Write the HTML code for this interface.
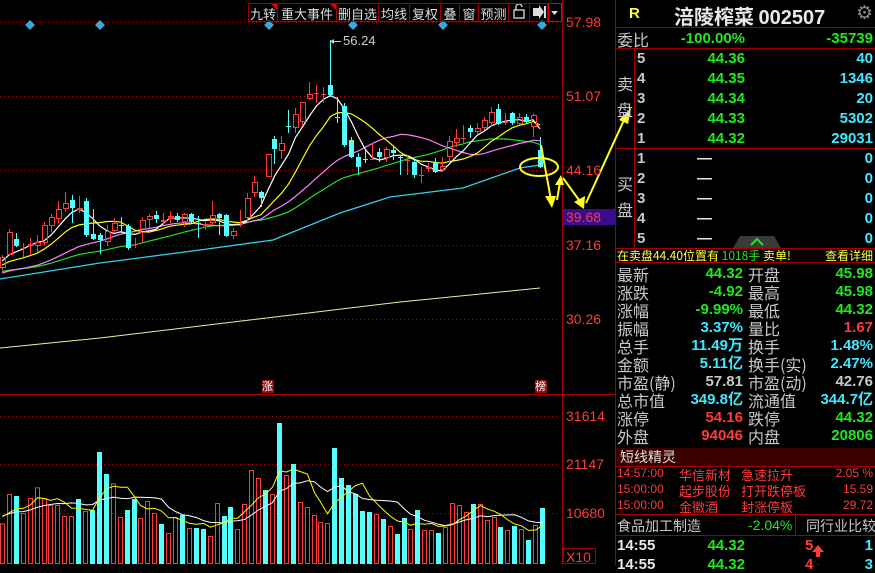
<!DOCTYPE html>
<html><head><meta charset="utf-8">
<style>
body{margin:0;background:#000;width:875px;height:565px;overflow:hidden;position:relative;font-family:"Liberation Sans","Noto Sans CJK SC",sans-serif}
.a{position:absolute;white-space:nowrap}
.cn{font-family:"Noto Sans CJK SC","WenQuanYi Zen Hei",sans-serif}
.tb{position:absolute;top:3px;height:19px;border:1px solid #a00000;border-left:none;color:#ddd;font-size:13px;line-height:19px;text-align:center;font-family:"Noto Sans CJK SC",sans-serif;box-sizing:border-box}
.ax{position:absolute;left:566px;color:#ff3a3a;font-size:14px}
.r{color:#ff3a3a}.g{color:#1ee81e}.c{color:#3ee8ff}.w{color:#e8e8e8}.y{color:#ffff40}.gy{color:#c8c8c8}
.n{font-weight:bold;font-size:15px}
.lb{position:absolute;left:617px;font-size:16px;color:#c8c8c8;font-family:"Noto Sans CJK SC",sans-serif;line-height:18px}
.lb2{position:absolute;left:748px;font-size:16px;color:#c8c8c8;font-family:"Noto Sans CJK SC",sans-serif;line-height:18px}
.v1{position:absolute;right:132px;font-size:15px;font-weight:bold;line-height:18px}
.v2{position:absolute;right:2px;font-size:15px;font-weight:bold;line-height:18px}
</style></head><body>
<svg id="s" width="875" height="565" style="position:absolute;left:0;top:0"></svg>

<div class="tb" style="left:248px;width:30px;border-left:1px solid #a00000">九转</div>
<div class="tb" style="left:278px;width:59px">重大事件</div>
<div class="tb" style="left:337px;width:42px">删自选</div>
<div class="tb" style="left:379px;width:31px">均线</div>
<div class="tb" style="left:410px;width:31px">复权</div>
<div class="tb" style="left:441px;width:19px">叠</div>
<div class="tb" style="left:460px;width:19px">窗</div>
<div class="tb" style="left:479px;width:30px">预测</div>
<div class="tb" style="left:509px;width:21px"></div>
<div class="tb" style="left:530px;width:18px"></div>
<div class="tb" style="left:548px;width:14px;border:1px solid #e00000"></div>

<div class="ax" style="top:14px">57.98</div>
<div class="ax" style="top:88px">51.07</div>
<div class="ax" style="top:162px">44.16</div>
<div class="ax" style="top:237px">37.16</div>
<div class="ax" style="top:311px">30.26</div>
<div class="a" style="left:563px;top:209px;width:53px;height:16px;background:#3c0a8c"></div>
<div class="ax" style="top:209px">39.68</div>
<div class="a" style="left:343px;top:33px;color:#ccc;font-size:13px">56.24</div>

<div class="a cn" style="left:262px;top:380px;width:12px;height:13px;background:#8a1010;color:#fff;font-size:11px;line-height:13px">涨</div>
<div class="a cn" style="left:535px;top:380px;width:12px;height:13px;background:#8a1010;color:#fff;font-size:11px;line-height:13px">榜</div>
<div class="ax" style="top:408px">31614</div>
<div class="ax" style="top:456px">21147</div>
<div class="ax" style="top:505px">10680</div>
<div class="a" style="left:563px;top:548px;width:33px;height:16px;border:1px solid #a00000;color:#ff3a3a;font-size:14px;line-height:16px;box-sizing:border-box;padding-left:2px">X10</div>

<div class="a y" style="left:629px;top:5px;font-size:15px;font-weight:bold">R</div>
<div class="a w" style="left:674px;top:1px;font-size:20px;font-weight:bold;font-family:'Noto Sans CJK SC',sans-serif">涪陵榨菜 <span style="font-family:'Liberation Sans',sans-serif">002507</span></div>
<div class="a" style="left:856px;top:2px;color:#888;font-size:19px">⚙</div>

<div class="lb" style="top:30px">委比</div>
<div class="a g n" style="right:130px;top:30px">-100.00%</div>
<div class="a g n" style="right:2px;top:30px">-35739</div>
<div class="a cn gy" style="left:617px;top:70px;font-size:16px;line-height:26px">卖<br>盘</div>
<div class="a cn gy" style="left:617px;top:170px;font-size:16px;line-height:26px">买<br>盘</div>
<div id="ob"></div>

<div class="a cn" style="left:617px;top:247px;font-size:12px;color:#ffff40">在卖盘44.40位置有 <span class="g">1018手</span> 卖单!</div>
<div class="a cn" style="right:2px;top:247px;font-size:12px;color:#ffff40">查看详细</div>

<div id="st"></div>

<div class="a" style="left:616px;top:448px;width:259px;height:18px;background:#3a0000"></div>
<div class="a cn" style="left:620px;top:448px;font-size:14px;color:#ddd;line-height:18px">短线精灵</div>
<div id="sp"></div>

<div class="a cn gy" style="left:617px;top:516px;font-size:14px">食品加工制造</div>
<div class="a g" style="left:748px;top:517px;font-size:14px">-2.04%</div>
<div class="a cn gy" style="left:806px;top:516px;font-size:14px">同行业比较</div>
<div class="a w n" style="left:617px;top:537px">14:55</div>
<div class="a g n" style="right:130px;top:537px">44.32</div>
<div class="a r n" style="left:805px;top:537px">5</div>
<div class="a c n" style="right:2px;top:537px">1</div>
<div class="a w n" style="left:617px;top:556px">14:55</div>
<div class="a g n" style="right:130px;top:556px">44.32</div>
<div class="a r n" style="left:805px;top:556px">4</div>
<div class="a c n" style="right:2px;top:556px">3</div>

<script>
var S=document.getElementById('s'),h='';
function L(x1,y1,x2,y2,c,w,d){h+='<line x1="'+x1+'" y1="'+y1+'" x2="'+x2+'" y2="'+y2+'" stroke="'+c+'" stroke-width="'+(w||1)+'"'+(d?' stroke-dasharray="'+d+'"':'')+'/>';}
function R(x,y,w,hh,f,s){h+='<rect x="'+x+'" y="'+y+'" width="'+w+'" height="'+hh+'" fill="'+(f||'none')+'"'+(s?' stroke="'+s+'"':'')+'/>';}
function P(pts,c,w){h+='<polyline fill="none" stroke="'+c+'" stroke-width="'+(w||1)+'" points="'+pts.map(function(p){return p[0].toFixed(1)+','+p[1].toFixed(1)}).join(' ')+'"/>';}
var RD='#ff3a3a',CY='#54ffff',DR='#a00000';
[22,96,170,245,319].forEach(function(y){L(0,y+.5,560,y+.5,'#b00000',1,'1 3');});
[416,464,513].forEach(function(y){L(0,y+.5,560,y+.5,'#b00000',1,'1 3');});
L(562.5,0,562.5,565,DR);L(0,394.5,615,394.5,DR);L(615.5,0,615.5,565,DR);
[30,100,269,353,443,542].forEach(function(x){h+='<rect x="'+(x-3.5)+'" y="21.5" width="7" height="7" fill="#3aa8d8" transform="rotate(45 '+x+' 25)"/>';});
var C=[['r',257,268,255,270],['r',232,255,229,256],['c',239,246,233,247],['r',248,249,243,257],['r',244,246,238,255],['r',242,246,235,252],['r',225,243,222,245],['r',217,226,214,232],['r',209,219,201,223],['r',203,209,192,212],['c',200,208,195,223],['r',208,210,196,213],['c',201,235,198,237],['c',234,239,209,240],['c',235,240,233,254],['r',231,242,225,246],['r',223,231,218,233],['c',225,226,217,233],['c',226,248,224,250],['r',244,245,238,248],['r',220,233,217,242],['r',216,220,214,228],['c',215,219,211,223],['r',220,222,213,225],['r',216,219,211,223],['c',216,220,213,222],['r',214,222,213,227],['c',214,222,213,223],['c',223,224,216,238],['r',224,226,222,230],['r',215,223,201,225],['c',214,218,213,235],['c',215,236,214,237],['r',231,236,228,239],['r',223,224,210,227],['r',198,218,193,221],['r',182,193,176,197],['c',192,198,191,207],['r',154,177,154,177],['c',139,149,136,164],['r',143,151,136,159],['c',126,127,110,133],['r',114,128,108,133],['r',102,122,102,125],['r',94,99,82,100],['r',93,94,85,103],['r',94,95,87,103],['c',85,95,40,97],['c',117,118,97,123],['c',106,145,103,147],['c',140,157,137,158],['c',157,167,153,175],['c',159,160,150,163],['r',159,160,143,160],['c',152,157,148,162],['r',149,158,147,162],['c',150,153,146,160],['c',157,158,155,175],['r',160,161,155,175],['c',162,175,160,178],['r',175,176,167,183],['r',167,169,163,172],['c',162,172,158,173],['r',166,170,157,172],['r',141,157,136,162],['r',138,143,129,147],['r',138,139,125,143],['c',128,132,125,138],['r',128,132,123,135],['r',120,128,117,130],['r',112,123,107,127],['c',109,124,104,125],['r',122,123,113,125],['c',113,123,112,125],['r',117,124,113,125],['c',117,122,114,123],['r',115,127,113,137],['c',150,167,137,168]];
var N=C.length,xs=[],cl=[];
for(var i=0;i<N;i++){xs.push(2+i*538/(N-1));var d=C[i];cl.push(d[0]=='r'?d[1]:d[2]);}
function ma(arr,n,pad){var o=[];for(var i=0;i<arr.length;i++){var s=0;for(var k=i-n+1;k<=i;k++)s+=(k<0?pad:arr[k]);o.push(s/n);}return o;}
P([[0,348],[100,338],[200,326],[300,314],[400,302],[540,288]],'#f0f0a0');
P([[0,279],[100,263],[200,250],[273,240],[340,213],[390,197],[463,188],[520,168],[540,165]],'#30d0f0',1.3);
[[30,'#20e020',272],[20,'#ff80ff',274],[10,'#ffff00',266],[5,'#ffffff',262]].forEach(function(m){var v=ma(cl,m[0],m[2]);P(v.map(function(y,i){return[xs[i],y]}),m[1],1.2);});
for(var i=0;i<N;i++){var d=C[i],x=Math.round(xs[i]);var col=d[0]=='r'?RD:CY;
 if(d[0]=='r'){L(x+.5,d[3],x+.5,d[1],col);L(x+.5,d[2],x+.5,d[4],col);var hh=Math.max(1,d[2]-d[1]);if(hh<=1)L(x-2,d[1]+.5,x+3,d[1]+.5,col);else R(x-1.5,d[1]+.5,5,hh-1,'none',col);}
 else{L(x+.5,d[3],x+.5,d[4],col);R(x-2,d[1],5,Math.max(1,d[2]-d[1]),col);}}
L(332,41.5,341,41.5,'#ccc');h+='<polygon points="330,41.5 334,39 334,44" fill="#ccc"/>';
var V=[['r',430],['r',342],['c',348],['r',399],['r',354],['r',322],['r',355],['r',375],['r',375],['r',408],['r',408],['c',357],['r',393],['c',390],['c',216],['c',282],['r',310],['r',411],['c',390],['c',357],['r',414],['r',363],['r',399],['c',432],['r',459],['r',411],['c',405],['r',444],['c',444],['c',447],['r',468],['r',369],['c',408],['c',381],['r',447],['r',372],['r',270],['r',294],['c',330],['r',342],['c',129],['r',285],['c',252],['r',366],['r',381],['r',405],['r',426],['r',429],['c',204],['c',294],['c',315],['c',342],['c',393],['c',396],['r',402],['c',417],['r',438],['c',462],['c',414],['r',447],['c',390],['r',450],['r',450],['c',459],['r',441],['r',369],['r',375],['r',396],['c',372],['r',372],['r',420],['r',411],['c',441],['r',450],['c',438],['r',447],['c',480],['r',435],['c',384]];
var vx=[],vy=[];
V.forEach(function(v,j){var x=Math.round(j*540/78),t=380+(v[1])/3;vx.push(x+2.5);vy.push(t);
 if(v[0]=='r')R(x+.5,t+.5,4,563-t,'none',RD);else R(x,t,5,564-t,CY);});
[[10,'#ffffff',515],[5,'#ffff00',515]].forEach(function(m){var v=ma(vy,m[0],m[2]);P(v.map(function(y,i){return[vx[i],y]}),m[1]);});
h+='<ellipse cx="539" cy="167" rx="19" ry="9" fill="none" stroke="#ffff20" stroke-width="2"/>';
var Y='#ffff20';
L(541,145,551,200,Y,2);h+='<polygon points="545,196 556,196 552,208" fill="'+Y+'"/>';
L(557,200,560,182,Y,2);h+='<polygon points="555,185 564,185 561,175" fill="'+Y+'"/>';
L(563,178,579,200,Y,2);h+='<polygon points="574,202 585,196 584,209" fill="'+Y+'"/>';
L(586,203,624,120,Y,2);h+='<polygon points="619,120 628,124 631,108" fill="'+Y+'"/>';
h+='<polygon points="271,4 277,4 277,10" fill="#e00000"/><polygon points="330,4 336,4 336,10" fill="#e00000"/>';
h+='<rect x="514" y="10" width="10" height="8" fill="none" stroke="#ddd" stroke-width="1.3"/><path d="M516,10 V7 a3,3 0 0 1 6,0" fill="none" stroke="#ddd" stroke-width="1.3"/>';
h+='<polygon points="533,8 539,8 539,5 544,12 539,19 539,16 533,16" fill="#ddd"/><rect x="544" y="6" width="2" height="12" fill="#ddd"/>';
h+='<polygon points="551,11 558,11 554.5,15" fill="#ddd"/>';
L(615,27.5,875,27.5,DR);L(615,48.5,875,48.5,DR);L(615,148.5,875,148.5,DR);L(615,248.5,875,248.5,DR);L(615,262.5,875,262.5,DR);
L(634.5,48,634.5,248,DR);L(615,466.5,875,466.5,DR);L(615,514.5,875,514.5,DR);L(615,535.5,875,535.5,DR);L(795.5,515,795.5,535,DR);
h+='<polygon points="740,236 774,236 781,248 733,248" fill="#3a3a3a"/><path d="M751,245 L757,239 L763,245" fill="none" stroke="#1ee81e" stroke-width="2"/>';
h+='<polygon points="812,552 818,545 824,552 820,552 820,557 816,557 816,552" fill="#ff3a3a"/><polygon points="812,571 818,564 824,571" fill="#ff3a3a"/>';
S.innerHTML=h;
var ob='',sp=[['44.36','40'],['44.35','1346'],['44.34','20'],['44.33','5302'],['44.32','29031']];
for(var i=0;i<5;i++){var t=50+i*20;ob+='<div class="a gy n" style="left:637px;top:'+t+'px">'+(5-i)+'</div><div class="a g n" style="right:130px;top:'+t+'px">'+sp[i][0]+'</div><div class="a c n" style="right:2px;top:'+t+'px">'+sp[i][1]+'</div>';}
for(var i=0;i<5;i++){var t=150+i*20;ob+='<div class="a gy n" style="left:637px;top:'+t+'px">'+(i+1)+'</div><div class="a w n" style="right:163px;top:'+t+'px">—</div><div class="a c n" style="right:2px;top:'+t+'px">0</div>';}
document.getElementById('ob').innerHTML=ob;
var st=[['最新','44.32','g','开盘','45.98','g'],['涨跌','-4.92','g','最高','45.98','g'],['涨幅','-9.99%','g','最低','44.32','g'],['振幅','3.37%','c','量比','1.67','r'],['总手','11.49万','c','换手','1.48%','c'],['金额','5.11亿','c','换手(实)','2.47%','c'],['市盈(静)','57.81','gy','市盈(动)','42.76','gy'],['总市值','349.8亿','c','流通值','344.7亿','c'],['涨停','54.16','r','跌停','44.32','g'],['外盘','94046','r','内盘','20806','g']];
var s2='';st.forEach(function(r,i){var t=265+i*18;s2+='<div class="lb" style="top:'+t+'px">'+r[0]+'</div><div class="v1 '+r[2]+'" style="top:'+t+'px">'+r[1]+'</div><div class="lb2" style="top:'+t+'px">'+r[3]+'</div><div class="v2 '+r[5]+'" style="top:'+t+'px">'+r[4]+'</div>';});
document.getElementById('st').innerHTML=s2;
var spd=[['14:57:00','华信新材','急速拉升','2.05 %'],['15:00:00','起步股份','打开跌停板','15.59'],['15:00:00','金徽酒','封涨停板','29.72']];
var s3='';spd.forEach(function(r,i){var t=466+i*16;s3+='<div class="a r" style="left:617px;top:'+t+'px;font-size:12px">'+r[0]+'</div><div class="a r cn" style="left:679px;top:'+(t-1)+'px;font-size:13px">'+r[1]+'</div><div class="a r cn" style="left:741px;top:'+(t-1)+'px;font-size:13px">'+r[2]+'</div><div class="a r" style="right:2px;top:'+t+'px;font-size:12px">'+r[3]+'</div>';});
document.getElementById('sp').innerHTML=s3;
</script>
</body></html>
